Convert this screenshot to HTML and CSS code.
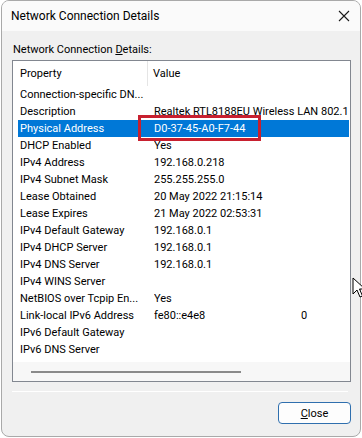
FILE: index.html
```html
<!DOCTYPE html>
<html>
	<head>
		<meta charset="utf-8" />
		<title>Network Connection Details</title>
		<link rel="stylesheet" href="styles.css">
	</head>
	<body>
		<div class="window">
			<div class="titlebar">
				<span class="title">Network Connection Details</span>
				<svg class="close_x" width="14" height="14" viewBox="0 0 14 14">
					<path d="M2 2 L12 12 M12 2 L2 12" stroke="#1a1a1a" stroke-width="1.1" fill="none" />
				</svg>
			</div>

			<div class="content">
				<div class="label">Network Connection <u>D</u>etails:</div>

				<div class="listbox">
					<div class="header">
						<div class="hcol1">Property</div>
						<div class="hcol2">Value</div>
					</div>

					<div class="rows">
						<div class="row"><div class="c1">Connection-specific DN...</div><div class="c2"></div></div>
						<div class="row"><div class="c1">Description</div><div class="c2">Realtek RTL8188EU Wireless LAN 802.1</div></div>
						<div class="row selected"><div class="c1">Physical Address</div><div class="c2">D0-37-45-A0-F7-44<span class="redbox"></span></div></div>
						<div class="row"><div class="c1">DHCP Enabled</div><div class="c2">Yes</div></div>
						<div class="row"><div class="c1">IPv4 Address</div><div class="c2">192.168.0.218</div></div>
						<div class="row"><div class="c1">IPv4 Subnet Mask</div><div class="c2">255.255.255.0</div></div>
						<div class="row"><div class="c1">Lease Obtained</div><div class="c2">20 May 2022 21:15:14</div></div>
						<div class="row"><div class="c1">Lease Expires</div><div class="c2">21 May 2022 02:53:31</div></div>
						<div class="row"><div class="c1">IPv4 Default Gateway</div><div class="c2">192.168.0.1</div></div>
						<div class="row"><div class="c1">IPv4 DHCP Server</div><div class="c2">192.168.0.1</div></div>
						<div class="row"><div class="c1">IPv4 DNS Server</div><div class="c2">192.168.0.1</div></div>
						<div class="row"><div class="c1">IPv4 WINS Server</div><div class="c2"></div></div>
						<div class="row"><div class="c1">NetBIOS over Tcpip En...</div><div class="c2">Yes</div></div>
						<div class="row"><div class="c1">Link-local IPv6 Address</div><div class="c2"><span class="v6a">fe80::e4e8</span><span class="v6b">0</span></div></div>
						<div class="row"><div class="c1">IPv6 Default Gateway</div><div class="c2"></div></div>
						<div class="row"><div class="c1">IPv6 DNS Server</div><div class="c2"></div></div>
					</div>

					<div class="hscroll">
						<div class="thumb"></div>
					</div>
				</div>

				<div class="separator"></div>

				<div class="buttons">
					<button class="btn"><u>C</u>lose</button>
				</div>
			</div>
		</div>

		<svg class="cursor" width="14" height="22" viewBox="0 0 14 22">
			<path d="M1 1 L1 17 L5 13 L8 20 L10.5 19 L7.5 12 L13 12 Z" fill="#fff" stroke="#000" stroke-width="1" />
		</svg>
	</body>
</html>
```

FILE: styles.css
```css
* {
	margin: 0;
	padding: 0;
	box-sizing: border-box;
}

body {
	width: 362px;
	height: 438px;
	background: #ffffff;
	font-family: Roboto, "Liberation Sans", sans-serif;
	font-size: 11px;
	color: #000;
	position: relative;
	overflow: hidden;
}

.window {
	margin-left: 1px;
	width: 360px;
	height: 437px;
	border: 1px solid #a9a9a9;
	border-radius: 8px;
	background: #f0f0f0;
	overflow: hidden;
	display: flex;
	flex-direction: column;
}

.titlebar {
	height: 30px;
	background: #fafafa;
	display: flex;
	align-items: center;
	justify-content: space-between;
	padding: 0 9px 0 9px;
}

.title {
	font-size: 12px;
	color: #000;
}

.close_x {
	display: block;
}

.content {
	padding: 11px 9px 0 10px;
	display: flex;
	flex-direction: column;
}

.label {
	height: 16px;
	line-height: 16px;
	padding-left: 1px;
	margin-bottom: 2px;
}

.listbox {
	width: 339px;
	height: 322px;
	border: 1px solid #828790;
	background: #fff;
	display: flex;
	flex-direction: column;
}

.header {
	height: 25px;
	display: flex;
	align-items: stretch;
}

.hcol1 {
	width: 135px;
	padding-left: 7px;
	border-right: 1px solid #e5e5e5;
	display: flex;
	align-items: center;
}

.hcol2 {
	flex: 1;
	padding-left: 5px;
	display: flex;
	align-items: center;
}

.rows {
	flex: 1;
	overflow: hidden;
}

.row {
	height: 17px;
	margin: 0 1px 0 5px;
	display: flex;
	align-items: center;
	white-space: nowrap;
}

.row .c1 {
	width: 136px;
	padding-left: 2px;
	flex-shrink: 0;
}

.row .c2 {
	flex: 1;
	overflow: hidden;
	position: relative;
}

.row.selected {
	background: #0078d7;
	color: #fff;
}

.row.selected .c2 {
	overflow: visible;
}

.redbox {
	position: absolute;
	left: -16px;
	top: -7px;
	width: 123px;
	height: 26px;
	border: 3px solid #c8202f;
}

.v6a {
	display: inline-block;
	width: 147px;
}

.hscroll {
	height: 19px;
	background: #f7f7f7;
	display: flex;
	align-items: center;
	padding-left: 18px;
}

.thumb {
	width: 210px;
	height: 2px;
	background: #8a8a8a;
}

.separator {
	margin-top: 9px;
	width: 336px;
	height: 1px;
	background: #a0a0a0;
	border-bottom: 1px solid #fff;
}

.buttons {
	display: flex;
	justify-content: flex-end;
	margin-top: 10px;
}

.btn {
	width: 73px;
	height: 22px;
	border: 1px solid #2f6fae;
	border-radius: 4px;
	background: #fdfdfd;
	font-family: Roboto, "Liberation Sans", sans-serif;
	font-size: 11px;
	color: #000;
}

.cursor {
	position: absolute;
	left: 352px;
	top: 277px;
}
```
